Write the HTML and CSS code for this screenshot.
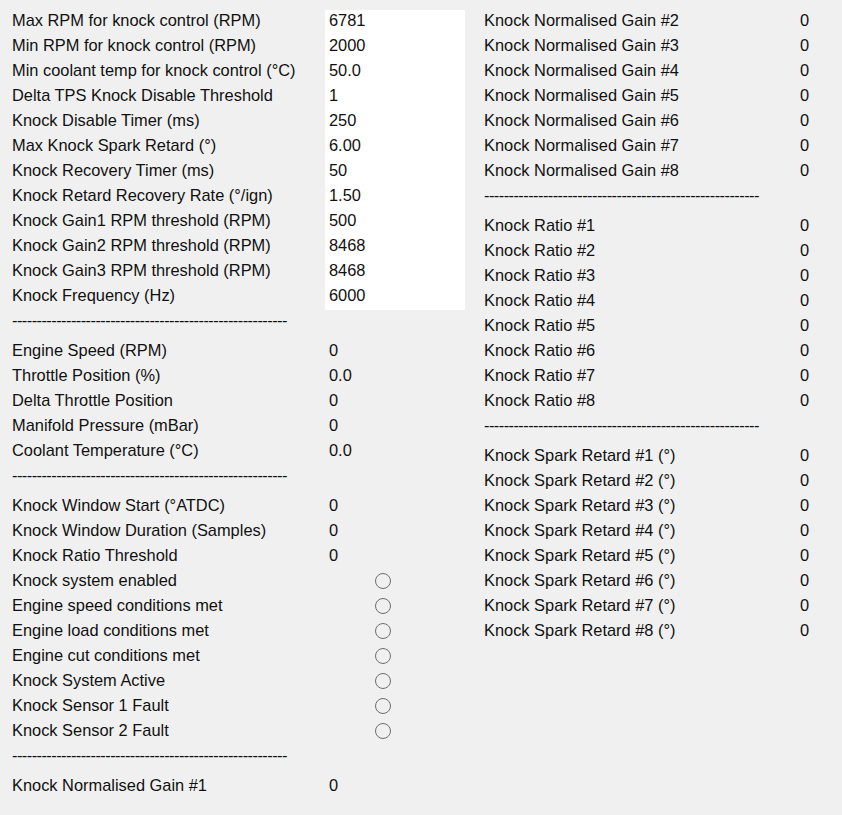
FILE: index.html
```html
<!DOCTYPE html>
<html lang="en">
<head>
    <meta charset="UTF-8">
    <title>Knock Control</title>
    <link rel="stylesheet" href="styles.css">
</head>
<body>
    <div class="panel">
        <section class="col left">
            <div class="row edit"><span>Max RPM for knock control (RPM)</span><span class="val">6781</span></div>
            <div class="row edit"><span>Min RPM for knock control (RPM)</span><span class="val">2000</span></div>
            <div class="row edit"><span>Min coolant temp for knock control (°C)</span><span class="val">50.0</span></div>
            <div class="row edit"><span>Delta TPS Knock Disable Threshold</span><span class="val">1</span></div>
            <div class="row edit"><span>Knock Disable Timer (ms)</span><span class="val">250</span></div>
            <div class="row edit"><span>Max Knock Spark Retard (°)</span><span class="val">6.00</span></div>
            <div class="row edit"><span>Knock Recovery Timer (ms)</span><span class="val">50</span></div>
            <div class="row edit"><span>Knock Retard Recovery Rate (°/ign)</span><span class="val">1.50</span></div>
            <div class="row edit"><span>Knock Gain1 RPM threshold (RPM)</span><span class="val">500</span></div>
            <div class="row edit"><span>Knock Gain2 RPM threshold (RPM)</span><span class="val">8468</span></div>
            <div class="row edit"><span>Knock Gain3 RPM threshold (RPM)</span><span class="val">8468</span></div>
            <div class="row edit"><span>Knock Frequency (Hz)</span><span class="val">6000</span></div>
            <div class="sep">--------------------------------------------------------</div>

            <div class="row"><span>Engine Speed (RPM)</span><span class="val">0</span></div>
            <div class="row"><span>Throttle Position (%)</span><span class="val">0.0</span></div>
            <div class="row"><span>Delta Throttle Position</span><span class="val">0</span></div>
            <div class="row"><span>Manifold Pressure (mBar)</span><span class="val">0</span></div>
            <div class="row"><span>Coolant Temperature (°C)</span><span class="val">0.0</span></div>
            <div class="sep">--------------------------------------------------------</div>

            <div class="row"><span>Knock Window Start (°ATDC)</span><span class="val">0</span></div>
            <div class="row"><span>Knock Window Duration (Samples)</span><span class="val">0</span></div>
            <div class="row"><span>Knock Ratio Threshold</span><span class="val">0</span></div>
            <div class="row"><span>Knock system enabled</span><span class="val"><i class="led"></i></span></div>
            <div class="row"><span>Engine speed conditions met</span><span class="val"><i class="led"></i></span></div>
            <div class="row"><span>Engine load conditions met</span><span class="val"><i class="led"></i></span></div>
            <div class="row"><span>Engine cut conditions met</span><span class="val"><i class="led"></i></span></div>
            <div class="row"><span>Knock System Active</span><span class="val"><i class="led"></i></span></div>
            <div class="row"><span>Knock Sensor 1 Fault</span><span class="val"><i class="led"></i></span></div>
            <div class="row"><span>Knock Sensor 2 Fault</span><span class="val"><i class="led"></i></span></div>
            <div class="sep">--------------------------------------------------------</div>

            <div class="row"><span>Knock Normalised Gain #1</span><span class="val">0</span></div>
        </section>

        <section class="col right">
            <div class="row"><span>Knock Normalised Gain #2</span><span class="val">0</span></div>
            <div class="row"><span>Knock Normalised Gain #3</span><span class="val">0</span></div>
            <div class="row"><span>Knock Normalised Gain #4</span><span class="val">0</span></div>
            <div class="row"><span>Knock Normalised Gain #5</span><span class="val">0</span></div>
            <div class="row"><span>Knock Normalised Gain #6</span><span class="val">0</span></div>
            <div class="row"><span>Knock Normalised Gain #7</span><span class="val">0</span></div>
            <div class="row"><span>Knock Normalised Gain #8</span><span class="val">0</span></div>
            <div class="sep">--------------------------------------------------------</div>

            <div class="row"><span>Knock Ratio #1</span><span class="val">0</span></div>
            <div class="row"><span>Knock Ratio #2</span><span class="val">0</span></div>
            <div class="row"><span>Knock Ratio #3</span><span class="val">0</span></div>
            <div class="row"><span>Knock Ratio #4</span><span class="val">0</span></div>
            <div class="row"><span>Knock Ratio #5</span><span class="val">0</span></div>
            <div class="row"><span>Knock Ratio #6</span><span class="val">0</span></div>
            <div class="row"><span>Knock Ratio #7</span><span class="val">0</span></div>
            <div class="row"><span>Knock Ratio #8</span><span class="val">0</span></div>
            <div class="sep">--------------------------------------------------------</div>

            <div class="row"><span>Knock Spark Retard #1 (°)</span><span class="val">0</span></div>
            <div class="row"><span>Knock Spark Retard #2 (°)</span><span class="val">0</span></div>
            <div class="row"><span>Knock Spark Retard #3 (°)</span><span class="val">0</span></div>
            <div class="row"><span>Knock Spark Retard #4 (°)</span><span class="val">0</span></div>
            <div class="row"><span>Knock Spark Retard #5 (°)</span><span class="val">0</span></div>
            <div class="row"><span>Knock Spark Retard #6 (°)</span><span class="val">0</span></div>
            <div class="row"><span>Knock Spark Retard #7 (°)</span><span class="val">0</span></div>
            <div class="row"><span>Knock Spark Retard #8 (°)</span><span class="val">0</span></div>
        </section>
    </div>
</body>
</html>
```

FILE: styles.css
```css
html, body {margin: 0; background: #f0f0f0;}
body {
    font-family: "Liberation Sans", Arial, sans-serif;
    font-size: 16.4px; color: #111;
}
.panel {display: flex; padding-top: 10px;}
.col {display: flex; flex-direction: column;}
.left {width: 472px; padding-left: 12px;}
.right {width: 358px;}

/* 25px rows, text sits a little high like the native labels */
.row {
    display: grid; height: 25px; line-height: 21px;
    white-space: nowrap;
}
.row > span {padding-bottom: 4px;}
.left .row {grid-template-columns: 313px 140px;}
.right .row {grid-template-columns: 316px 40px;}
.val {padding-left: 4px;}
.right .val {padding-left: 0;}

/* editable block: white value cells form one box */
.edit .val {background: #fff;}

.sep {
    height: 30px; line-height: 21px;
    white-space: nowrap; letter-spacing: -0.55px;
}

.led {
    display: inline-block; box-sizing: border-box;
    width: 16px; height: 16px;
    border: 1.7px solid #6e6e6e; border-radius: 50%;
    margin-left: 46px; vertical-align: middle; position: relative; top: -1px;
}
```
